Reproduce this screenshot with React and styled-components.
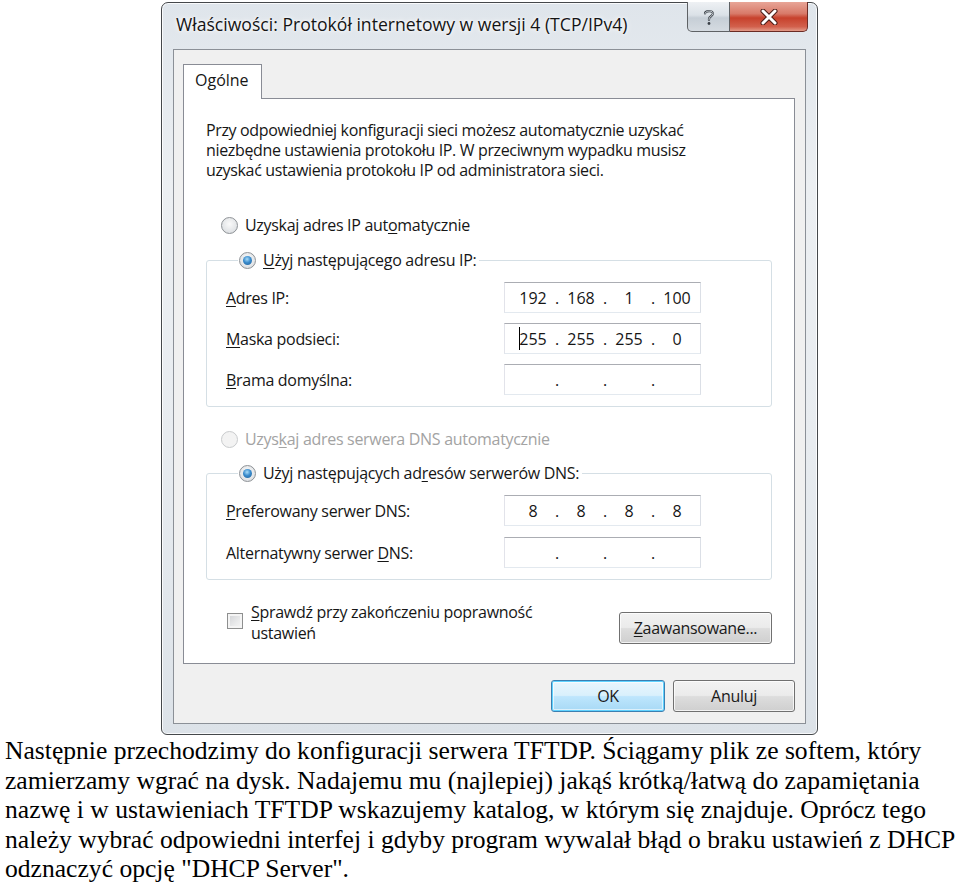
import React from 'react';
import styled, { createGlobalStyle, css } from 'styled-components';

const Global = createGlobalStyle`
  body {
    margin: 0;
    background: #fff;
  }
`

const ui = `"Open Sans", "DejaVu Sans", sans-serif`

const Page = styled.div`
  padding-top: 2px;
`

const Window = styled.div`
  box-sizing: border-box;
  margin-left: 161px;
  width: 657px;
  height: 733px;
  display: flex;
  flex-direction: column;
  padding: 0 11px 10px 11px;
  border: 1px solid #45484b;
  border-radius: 7px 7px 6px 6px;
  background: linear-gradient(180deg, #dfe5eb 0%, #eceff2 25%, #e8ecf0 60%, #dce2e8 100%);
  box-shadow: inset 0 0 0 1px rgba(255,255,255,.8);
  font-family: ${ui};
  color: #161616;
`

const TitleBar = styled.div`
  height: 46px;
  display: flex;
  justify-content: space-between;
  align-items: flex-start;
`

const Title = styled.div`
  padding: 9px 0 0 3px;
  font-size: 17.6px;
  color: #141414;
  text-shadow: 0 0 6px #fff, 0 0 3px #fff;
`

const Captions = styled.div`
  display: flex;
  margin: -1px -2px 0 0;
`

const CaptionButton = styled.div`
  height: 30px;
  display: flex;
  align-items: center;
  justify-content: center;
  box-sizing: border-box;
  border: 1px solid #5f6265;
  border-top: none;
  ${p => p.close ? css`
    width: 78px;
    border-left: none;
    border-radius: 0 0 5px 0;
    border-color: #6a2b24;
    background: linear-gradient(180deg, #e8a597 0%, #d87a69 40%, #c7412c 55%, #d2604c 85%, #e29a88 100%);
  ` : css`
    width: 43px;
    border-radius: 0 0 0 5px;
    background: linear-gradient(180deg, #eef1f4 0%, #dbe1e7 45%, #c6ced6 55%, #d5dbe1 100%);
  `}
`

const Client = styled.div`
  flex: 1;
  display: flex;
  flex-direction: column;
  padding: 14px 10px 0 9px;
  border: 1px solid #8b9097;
  background: #f0f0f0;
`

const TabStrip = styled.div`
  display: flex;
`

const Tab = styled.div`
  position: relative;
  z-index: 1;
  box-sizing: border-box;
  width: 79px;
  height: 35px;
  margin-bottom: -1px;
  padding: 4px 0 0 11px;
  border: 1px solid #898c95;
  border-bottom: none;
  background: #fff;
  font-size: 16px;
`

const Panel = styled.div`
  box-sizing: border-box;
  width: 612px;
  height: 566px;
  padding: 21px 22px 0 22px;
  border: 1px solid #898c95;
  background: #fff;
  font-size: 16px;
  line-height: 20px;
`

const Intro = styled.p`
  margin: 0;
  letter-spacing: -0.35px;
`

const Option = styled.label`
  display: flex;
  align-items: center;
  gap: 7px;
  height: 20px;
  margin: ${p => p.$mt || 0}px 0 0 15px;
  letter-spacing: -0.3px;
  color: ${p => p.disabled ? '#a3a3a3' : 'inherit'};
`

const Radio = styled.span`
  box-sizing: border-box;
  width: 17px;
  height: 17px;
  border-radius: 50%;
  display: flex;
  align-items: center;
  justify-content: center;
  border: 1px solid ${p => p.disabled ? '#c9cbcd' : '#8e9296'};
  background: ${p => p.disabled ? '#f3f3f3' : 'radial-gradient(circle at 50% 40%, #fafafa 0%, #dcdfe2 80%)'};
  &::after {
    content: '';
    display: ${p => p.checked ? 'block' : 'none'};
    width: 9px;
    height: 9px;
    border-radius: 50%;
    background: radial-gradient(circle at 45% 35%, #a9dcf8 0%, #3a8ccd 45%, #1d5d96 100%);
  }
`

const Group = styled.fieldset`
  margin: ${p => p.$mt || 0}px 0 0 0;
  padding: 12px 0 11px 19px;
  border: 1px solid #d5dfe5;
  border-radius: 3px;
  display: flex;
  flex-direction: column;
  gap: ${p => p.$gap || 10}px;
`

const Legend = styled.legend`
  margin-left: 12px;
  padding: 0 3px 0 1px;
  height: 20px;
  display: flex;
  align-items: center;
  gap: 7px;
  letter-spacing: -0.3px;
`

const FieldRow = styled.div`
  display: flex;
  align-items: center;
  height: 31px;
`

const FieldLabel = styled.span`
  width: 278px;
  letter-spacing: -0.3px;
`

const IpBox = styled.div`
  box-sizing: border-box;
  width: 197px;
  height: 31px;
  display: flex;
  align-items: center;
  padding: 0 3px 0 8px;
  border: 1px solid;
  border-color: #abadb3 #dbdfe6 #e3e9ef #e2e3ea;
  background: #fff;
`

const Octet = styled.span`
  flex: 1;
  text-align: center;
  font-size: 16px;
`

const Caret = styled.span`
  position: relative;
  &::before {
    content: '';
    position: absolute;
    left: 0;
    top: -1px;
    bottom: 0;
    border-left: 1px solid #000;
  }
`

const Dot = styled.span`
  width: 8px;
  text-align: center;
`

const U = styled.span`
  text-decoration: underline;
  text-underline-offset: 2px;
`

const Bottom = styled.div`
  display: flex;
  justify-content: space-between;
  align-items: flex-start;
  margin-top: 22px;
`

const Check = styled.label`
  display: flex;
  align-items: flex-start;
  gap: 8px;
  margin-left: 21px;
  line-height: 21px;
  letter-spacing: -0.3px;
`

const CheckBox = styled.span`
  flex: none;
  box-sizing: border-box;
  width: 16px;
  height: 16px;
  margin-top: 11px;
  border: 1px solid #8e8f8f;
  background: linear-gradient(135deg, #cfd1d4 0%, #e9eaeb 60%, #f6f6f6 100%);
  box-shadow: inset 0 0 0 2px #f4f4f4;
`

const Button = styled.button`
  box-sizing: border-box;
  width: ${p => p.$w}px;
  height: 32px;
  padding: 0;
  font-family: ${ui};
  font-size: 16px;
  letter-spacing: -0.3px;
  color: #1a1a1a;
  border-radius: 3px;
  border: 1px solid #707070;
  background: linear-gradient(180deg, #f2f2f2 0%, #ebebeb 48%, #dddddd 52%, #cfcfcf 100%);
  box-shadow: inset 0 0 0 1px rgba(255,255,255,.75);
  ${p => p.$default && css`
    border-color: #3c7fb1;
    background: linear-gradient(180deg, #eaf6fd 0%, #d9f0fc 48%, #bee6fd 52%, #a7d9f5 100%);
    box-shadow: inset 0 0 0 1px #5fd2ff, inset 0 0 0 2px rgba(255,255,255,.6);
  `}
`

const Actions = styled.div`
  display: flex;
  justify-content: flex-end;
  gap: 8px;
  margin-top: 16px;
`

const Article = styled.div`
  margin-top: 1px;
  padding: 0 0 0 5px;
  font-family: "Liberation Serif", "Times New Roman", serif;
  font-size: 25.6px;
  line-height: 29.6px;
  color: #000;
`

const HelpIcon = () => (
  <svg width="14" height="18" viewBox="0 0 14 18">
    <path d="M3 5.5 C3 2.5 11 2 11 5.5 C11 8 7 8.5 7 11 L7 12" fill="none" stroke="#3b4148" strokeWidth="2.2" strokeLinecap="round" />
    <circle cx="7" cy="15.5" r="1.4" fill="#3b4148" />
    <path d="M3 5.5 C3 2.5 11 2 11 5.5 C11 8 7 8.5 7 11 L7 12" fill="none" stroke="#e9eef2" strokeWidth="0.8" strokeLinecap="round" />
  </svg>
)

const CloseIcon = () => (
  <svg width="18" height="16" viewBox="0 0 18 16">
    <path d="M3 2 L15 14 M15 2 L3 14" stroke="#4a1c16" strokeWidth="5" strokeLinecap="round" />
    <path d="M3 2 L15 14 M15 2 L3 14" stroke="#fff" strokeWidth="3" strokeLinecap="round" />
  </svg>
)

const IpField = ({ octets, caret }) => (
  <IpBox>
    {[0, 1, 2, 3].map(i => (
      <React.Fragment key={i}>
        {i > 0 && <Dot>.</Dot>}
        <Octet>{caret && i === 0 ? <Caret>{octets[i]}</Caret> : octets[i]}</Octet>
      </React.Fragment>
    ))}
  </IpBox>
)

const empty = ['', '', '', '']

export default function App() {
  return (
    <Page>
      <Global />
      <Window>
        <TitleBar>
          <Title>Właściwości: Protokół internetowy w wersji 4 (TCP/IPv4)</Title>
          <Captions>
            <CaptionButton><HelpIcon /></CaptionButton>
            <CaptionButton close><CloseIcon /></CaptionButton>
          </Captions>
        </TitleBar>
        <Client>
          <TabStrip>
            <Tab>Ogólne</Tab>
          </TabStrip>
          <Panel>
            <Intro>
              Przy odpowiedniej konfiguracji sieci możesz automatycznie uzyskać<br />
              niezbędne ustawienia protokołu IP. W przeciwnym wypadku musisz<br />
              uzyskać ustawienia protokołu IP od administratora sieci.
            </Intro>

            <Option $mt={35}>
              <Radio />
              <span>Uzyskaj adres IP aut<U>o</U>matycznie</span>
            </Option>
            <Group $mt={15}>
              <Legend>
                <Radio checked />
                <span><U>U</U>żyj następującego adresu IP:</span>
              </Legend>
              <FieldRow>
                <FieldLabel><U>A</U>dres IP:</FieldLabel>
                <IpField octets={['192', '168', '1', '100']} />
              </FieldRow>
              <FieldRow>
                <FieldLabel><U>M</U>aska podsieci:</FieldLabel>
                <IpField octets={['255', '255', '255', '0']} caret />
              </FieldRow>
              <FieldRow>
                <FieldLabel><U>B</U>rama domyślna:</FieldLabel>
                <IpField octets={empty} />
              </FieldRow>
            </Group>

            <Option $mt={22} disabled>
              <Radio disabled />
              <span>Uzys<U>k</U>aj adres serwera DNS automatycznie</span>
            </Option>
            <Group $mt={14} $gap={11}>
              <Legend>
                <Radio checked />
                <span>Użyj następujących ad<U>r</U>esów serwerów DNS:</span>
              </Legend>
              <FieldRow>
                <FieldLabel><U>P</U>referowany serwer DNS:</FieldLabel>
                <IpField octets={['8', '8', '8', '8']} />
              </FieldRow>
              <FieldRow>
                <FieldLabel>Alternatywny serwer <U>D</U>NS:</FieldLabel>
                <IpField octets={empty} />
              </FieldRow>
            </Group>

            <Bottom>
              <Check>
                <CheckBox />
                <span><U>S</U>prawdź przy zakończeniu poprawność<br />ustawień</span>
              </Check>
              <Button $w={153} style={{ marginTop: 10 }}><U>Z</U>aawansowane...</Button>
            </Bottom>
          </Panel>
          <Actions>
            <Button $w={114} $default>OK</Button>
            <Button $w={122}>Anuluj</Button>
          </Actions>
        </Client>
      </Window>
      <Article>
        Następnie przechodzimy do konfiguracji serwera TFTDP. Ściągamy plik ze softem, który
        zamierzamy wgrać na dysk. Nadajemu mu (najlepiej) jakąś krótką/łatwą do zapamiętania
        nazwę i w ustawieniach TFTDP wskazujemy katalog, w którym się znajduje. Oprócz tego
        należy wybrać odpowiedni interfej i gdyby program wywalał błąd o braku ustawień z DHCP
        odznaczyć opcję "DHCP Server".
      </Article>
    </Page>
  );
}
